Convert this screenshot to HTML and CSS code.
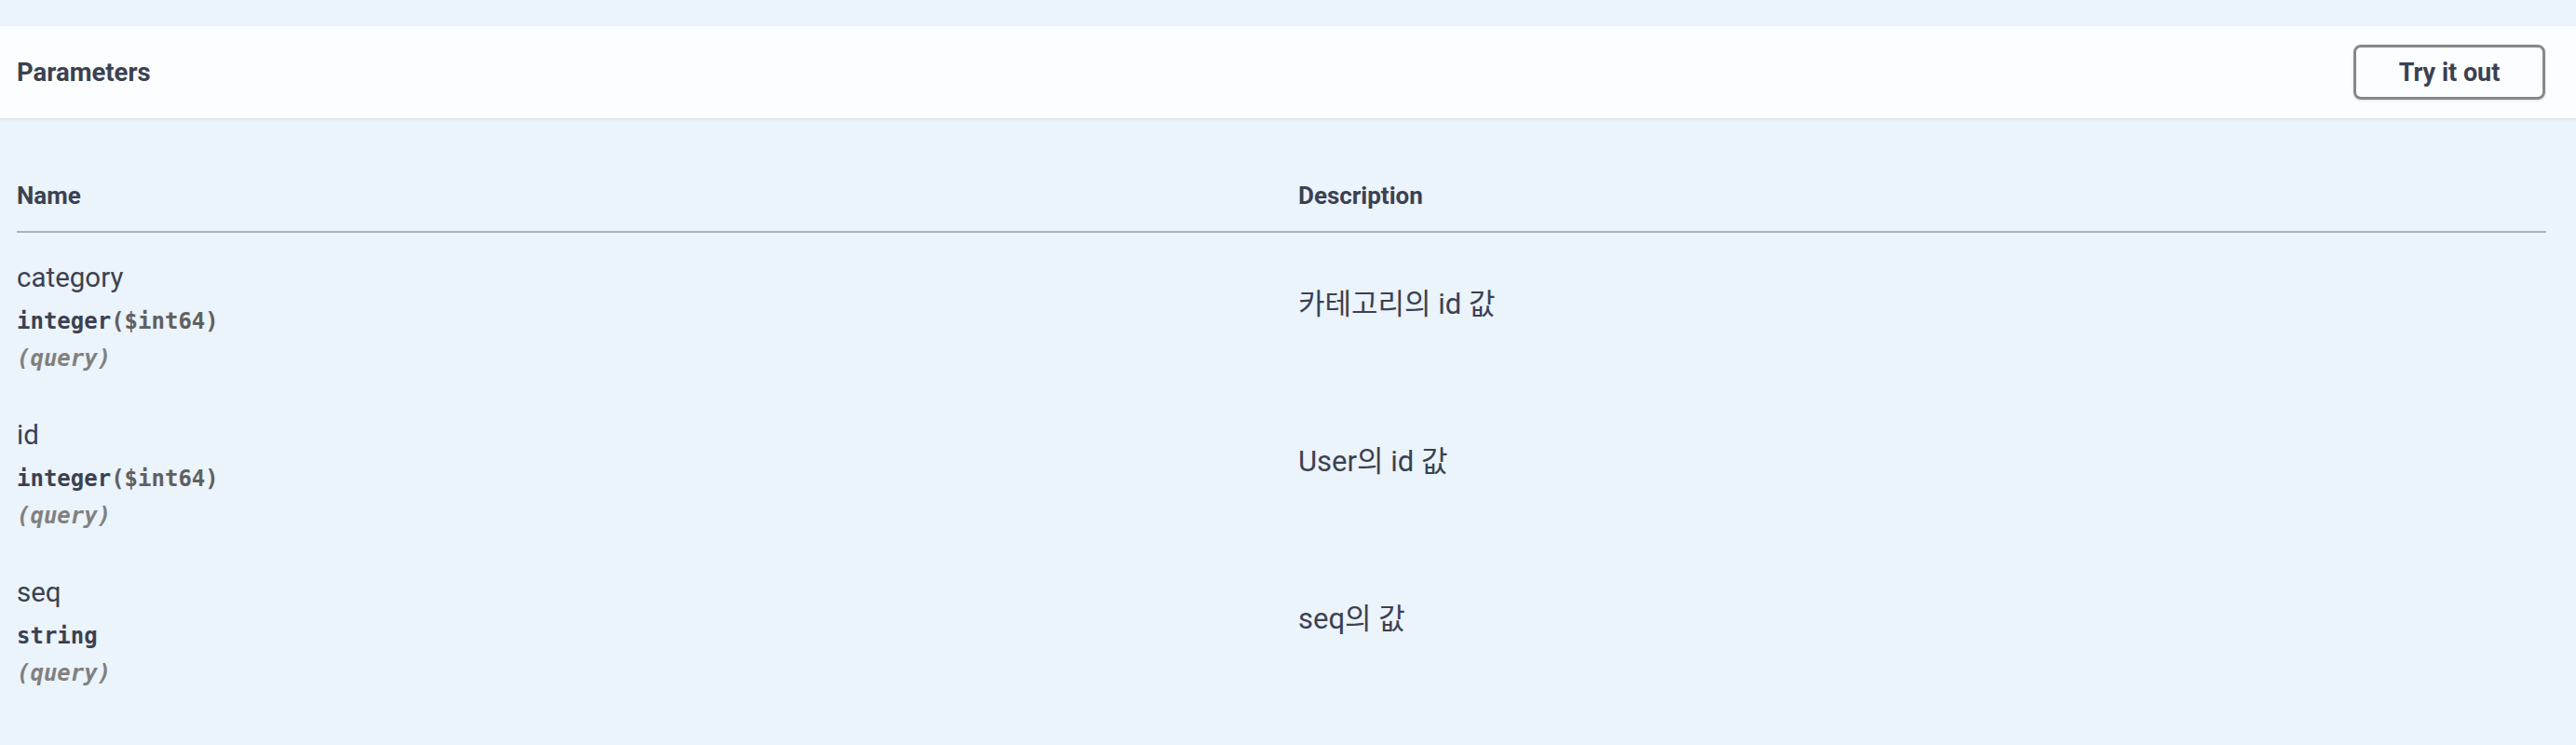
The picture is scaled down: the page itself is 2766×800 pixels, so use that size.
FILE: index.html
```html
<!DOCTYPE html>
<html lang="ko">
<head>
<meta charset="utf-8">
<title>Parameters</title>
<link rel="stylesheet" href="styles.css">
</head>
<body>
<div class="opblock">
  <div class="section-header">
    <h4 class="title">Parameters</h4>
    <button class="try-out">Try it out</button>
  </div>
  <div class="params">
    <div class="thead">
      <div class="th">Name</div>
      <div class="th">Description</div>
    </div>
    <div class="row">
      <div class="name-col">
        <div class="pname">category</div>
        <div class="ptype">integer<span class="fmt">($int64)</span></div>
        <div class="pin">(query)</div>
      </div>
      <div class="desc">카테고리의 id 값</div>
    </div>
    <div class="row">
      <div class="name-col">
        <div class="pname">id</div>
        <div class="ptype">integer<span class="fmt">($int64)</span></div>
        <div class="pin">(query)</div>
      </div>
      <div class="desc">User의 id 값</div>
    </div>
    <div class="row">
      <div class="name-col">
        <div class="pname">seq</div>
        <div class="ptype">string</div>
        <div class="pin">(query)</div>
      </div>
      <div class="desc">seq의 값</div>
    </div>
  </div>
</div>
</body>
</html>
```

FILE: styles.css
```css
html, body {
  margin: 0;
  padding: 0;
}
body {
  background: #ebf3fb;
  color: #3b4151;
  font-family: Roboto, "Noto Sans CJK KR", sans-serif;
  height: 800px;
  overflow: hidden;
}
.opblock {
  padding-top: 28px;
}
.section-header {
  height: 99px;
  box-sizing: border-box;
  background: #fbfdfe;
  box-shadow: 0 1px 3px rgba(0, 0, 0, 0.1);
  display: flex;
  align-items: center;
  justify-content: space-between;
  padding: 0 33px 0 18px;
}
.title {
  margin: 0;
  font-size: 27.5px;
  font-weight: 700;
  line-height: 34px;
  color: #3b4151;
}
.try-out {
  width: 206px;
  height: 59px;
  box-sizing: border-box;
  border: 3px solid #888888;
  border-radius: 8px;
  background: transparent;
  box-shadow: 0 1px 3px rgba(0, 0, 0, 0.12);
  font-family: Roboto, sans-serif;
  font-weight: 700;
  font-size: 27px;
  color: #3b4151;
  padding: 0;
}
.params {
  padding: 0 32px 0 18px;
}
.thead {
  display: grid;
  grid-template-columns: 1376px 1fr;
  margin-top: 67px;
  padding-bottom: 22px;
  border-bottom: 2px solid #aab1bc;
}
.th {
  font-size: 26px;
  font-weight: 700;
  line-height: 32px;
}
.row {
  display: grid;
  grid-template-columns: 1376px 1fr;
  align-items: center;
  padding: 30px 0 19px;
}
.pname {
  font-size: 29.5px;
  line-height: 36px;
}
.ptype {
  margin-top: 14px;
  font-family: "DejaVu Sans Mono", monospace;
  font-size: 24px;
  font-weight: 700;
  line-height: 30px;
  color: #3b4151;
}
.fmt {
  color: #606060;
  font-weight: 600;
}
.pin {
  margin-top: 10px;
  font-family: "DejaVu Sans Mono", monospace;
  font-size: 24px;
  font-style: italic;
  font-weight: 600;
  line-height: 30px;
  color: #808080;
}
.desc {
  font-size: 31px;
  line-height: 36px;
  padding-bottom: 26px;
}
```
